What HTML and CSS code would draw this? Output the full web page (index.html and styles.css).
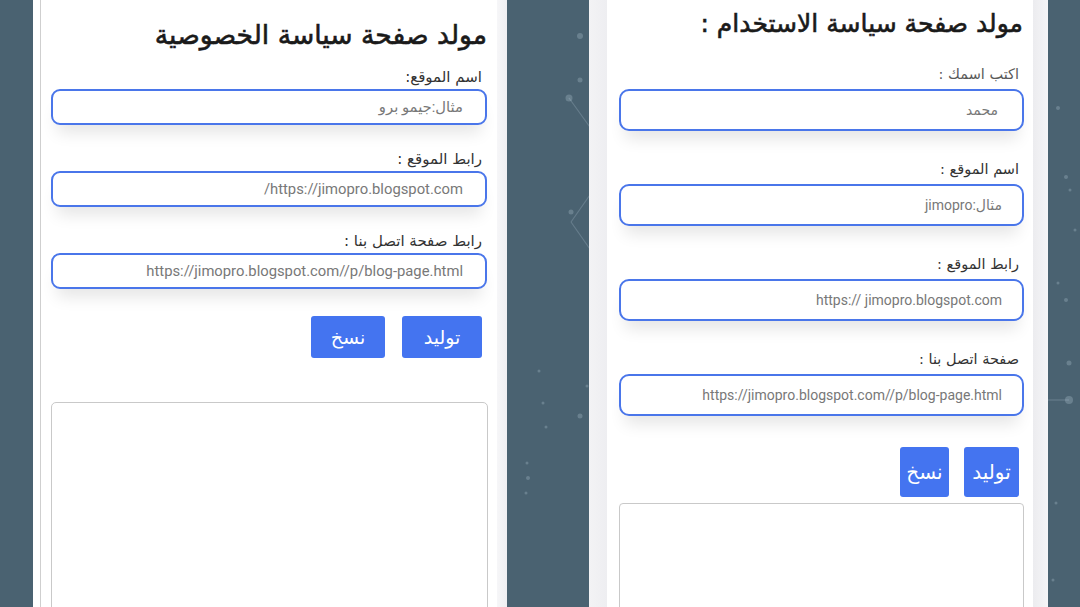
FILE: index.html
```html
<!DOCTYPE html>
<html lang="ar">
<head>
<meta charset="utf-8">
<title>مولد صفحة سياسة الخصوصية</title>
<link rel="stylesheet" href="styles.css">
</head>
<body>
<svg class="bg-net" width="1080" height="607" viewBox="0 0 1080 607" aria-hidden="true">
  <g stroke="rgba(200,220,230,0.22)" stroke-width="1.2" fill="none">
    <line x1="569" y1="98" x2="592" y2="130"/>
    <line x1="592" y1="192" x2="571" y2="222"/>
    <line x1="571" y1="222" x2="592" y2="252"/>
    <line x1="1048" y1="400" x2="1069" y2="400"/>
  </g>
  <g fill="rgba(200,220,230,0.25)">
    <circle cx="580" cy="36" r="3"/>
    <circle cx="580" cy="80" r="2.5"/>
    <circle cx="569" cy="98" r="3.5"/>
    <circle cx="571" cy="212" r="2.5"/>
    <circle cx="1069" cy="400" r="4"/>
    <circle cx="1069" cy="363" r="2.5"/>
    <circle cx="1066" cy="300" r="2"/>
    <circle cx="1058" cy="108" r="2"/>
    <circle cx="1066" cy="177" r="2"/>
    <circle cx="1058" cy="283" r="1.5"/>
    <circle cx="1056" cy="503" r="1.5"/>
    <circle cx="1053" cy="580" r="1.5"/>
    <circle cx="539" cy="371" r="1.5"/>
    <circle cx="543" cy="403" r="1.5"/>
    <circle cx="580" cy="416" r="2.5"/>
    <circle cx="546" cy="427" r="1.5"/>
    <circle cx="527" cy="463" r="1.5"/>
    <circle cx="528" cy="478" r="2"/>
    <circle cx="526" cy="493" r="1.5"/>
    <circle cx="587" cy="386" r="1.5"/>
    <circle cx="1070" cy="190" r="1.5"/>
    <circle cx="1075" cy="230" r="1.5"/>
  </g>
</svg>

<div class="stage">
  <div class="gutter-left"></div>

  <section class="phone phone-left">
    <div class="edge-white"></div>
    <div class="screen">
      <h1 class="title-l">مولد صفحة سياسة الخصوصية</h1>

      <div class="field-l">
        <label class="label-l">اسم الموقع:</label>
        <input class="input-l" type="text" placeholder="مثال:جيمو برو">
      </div>
      <div class="field-l">
        <label class="label-l">رابط الموقع :</label>
        <input class="input-l" type="text" placeholder="https://jimopro.blogspot.com/">
      </div>
      <div class="field-l">
        <label class="label-l">رابط صفحة اتصل بنا :</label>
        <input class="input-l" type="text" placeholder="https://jimopro.blogspot.com//p/blog-page.html">
      </div>

      <div class="buttons-l">
        <button class="btn btn-l btn-gen-l">توليد</button>
        <button class="btn btn-l btn-copy-l">نسخ</button>
      </div>

      <textarea class="output-l"></textarea>
    </div>
    <div class="edge-gray"></div>
  </section>

  <div class="gutter-mid"></div>

  <section class="phone phone-right">
    <div class="side-gray-l"></div>
    <div class="card">
      <h1 class="title-r">مولد صفحة سياسة الاستخدام :</h1>

      <div class="field-r">
        <label class="label-r label-soft">اكتب اسمك :</label>
        <input class="input-r input-name" type="text" placeholder="محمد">
      </div>
      <div class="field-r">
        <label class="label-r">اسم الموقع :</label>
        <input class="input-r" type="text" placeholder="مثال:jimopro">
      </div>
      <div class="field-r">
        <label class="label-r">رابط الموقع :</label>
        <input class="input-r" type="text" placeholder="https:// jimopro.blogspot.com">
      </div>
      <div class="field-r">
        <label class="label-r">صفحة اتصل بنا :</label>
        <input class="input-r" type="text" placeholder="https://jimopro.blogspot.com//p/blog-page.html">
      </div>

      <div class="buttons-r">
        <button class="btn btn-r btn-gen-r">توليد</button>
        <button class="btn btn-r btn-copy-r">نسخ</button>
      </div>

      <textarea class="output-r"></textarea>
    </div>
    <div class="side-gray-r"></div>
  </section>
</div>
</body>
</html>
```

FILE: styles.css
```css
* { box-sizing: border-box; }

html, body {
  margin: 0;
  padding: 0;
}

body {
  width: 1080px;
  height: 607px;
  overflow: hidden;
  position: relative;
  background: #4a6271;
  font-family: Roboto, "DejaVu Sans", sans-serif;
}

.bg-net {
  position: absolute;
  left: 0;
  top: 0;
  z-index: 0;
}

.stage {
  position: relative;
  z-index: 1;
  display: flex;
  height: 607px;
  overflow: hidden;
}

.gutter-left { width: 33px; flex: none; }
.gutter-mid { width: 82px; flex: none; }

.phone {
  display: flex;
  flex: none;
  height: 607px;
  overflow: hidden;
  direction: ltr;
}

/* ---------- left phone ---------- */
.phone-left {
  width: 474px;
  background: #ffffff;
}

.edge-white {
  width: 7px;
  background: #ffffff;
}

.screen {
  width: 457px;
  border-left: 1px solid #cfcfcf;
  padding: 15px 10px 0 10px;
  direction: rtl;
  background: #ffffff;
}

.edge-gray {
  width: 10px;
  background: linear-gradient(to right, #f6f6f8, #efeff2);
}

.title-l {
  margin: 0 0 12px 0;
  font-family: "DejaVu Sans", sans-serif;
  font-size: 26.6px;
  line-height: 40px;
  font-weight: normal;
  -webkit-text-stroke: 0.6px #1a1a1a;
  color: #1a1a1a;
  text-align: right;
}

.field-l {
  margin-bottom: 24px;
}

.label-l {
  display: block;
  margin: 0 5px 2px 0;
  font-family: "DejaVu Sans", sans-serif;
  font-size: 15px;
  line-height: 20px;
  color: #333333;
}

.input-l {
  display: block;
  width: 100%;
  height: 36px;
  border: 2px solid #4a76ea;
  border-radius: 9px;
  background: #ffffff;
  padding: 0 22px 0 10px;
  direction: rtl;
  font-family: Roboto, "DejaVu Sans", sans-serif;
  font-size: 14.8px;
  color: #666;
  outline: none;
  box-shadow: 0 14px 16px -6px rgba(0, 0, 0, 0.1);
}

.input-l::placeholder,
.input-r::placeholder {
  color: #787878;
  opacity: 1;
}

.buttons-l {
  display: flex;
  gap: 17px;
  margin: 27px 5px 0 0;
}

.btn {
  border: none;
  color: #ffffff;
  background: #4474f0;
  font-family: "DejaVu Sans", sans-serif;
  cursor: pointer;
  padding: 0;
}

.btn-l {
  height: 42px;
  border-radius: 3px;
  font-size: 19px;
}

.btn-gen-l { width: 80px; }
.btn-copy-l { width: 74px; }

.output-l {
  display: block;
  width: 437px;
  height: 260px;
  margin: 44px -1px 0 -1px;
  border: 1px solid #c9c9c9;
  border-radius: 5px;
  background: #ffffff;
  resize: none;
}

/* ---------- right phone ---------- */
.phone-right {
  width: 459px;
  background: #f4f4f6;
}

.side-gray-l {
  width: 18px;
  background: linear-gradient(to right, #f3f3f5, #eeeef1);
}

.side-gray-r {
  width: 15px;
  background: linear-gradient(to right, #ececef, #f5f5f7);
}

.card {
  width: 426px;
  background: #ffffff;
  padding: 4px 10px 0 11px;
  direction: rtl;
}

.title-r {
  margin: 0 0 19px 0;
  font-family: "DejaVu Sans", sans-serif;
  font-size: 25px;
  line-height: 40px;
  font-weight: normal;
  -webkit-text-stroke: 0.6px #1a1a1a;
  color: #1a1a1a;
  text-align: right;
}

.field-r {
  margin-bottom: 27px;
}

.label-r {
  display: block;
  margin: 0 4px 4px 0;
  font-family: "DejaVu Sans", sans-serif;
  font-size: 14.5px;
  line-height: 22px;
  color: #333333;
}

.label-soft { color: #5a5a5a; }

.input-r {
  display: block;
  width: 405px;
  margin-right: -1px;
  height: 42px;
  border: 2px solid #4a76ea;
  border-radius: 10px;
  background: #ffffff;
  padding: 0 20px 0 10px;
  direction: rtl;
  font-family: Roboto, "DejaVu Sans", sans-serif;
  font-size: 14px;
  color: #666;
  outline: none;
  box-shadow: 0 14px 16px -6px rgba(0, 0, 0, 0.1);
}

.input-name {
  padding-right: 24px;
}

.buttons-r {
  display: flex;
  gap: 15px;
  margin: 31px 4px 0 0;
}

.btn-r {
  height: 50px;
  border-radius: 3px;
  font-size: 20px;
}

.btn-gen-r { width: 55px; }
.btn-copy-r { width: 49px; }

.output-r {
  display: block;
  width: 405px;
  height: 200px;
  margin: 6px -1px 0 0;
  border: 1px solid #c9c9c9;
  border-radius: 4px;
  background: #ffffff;
  resize: none;
}
```
